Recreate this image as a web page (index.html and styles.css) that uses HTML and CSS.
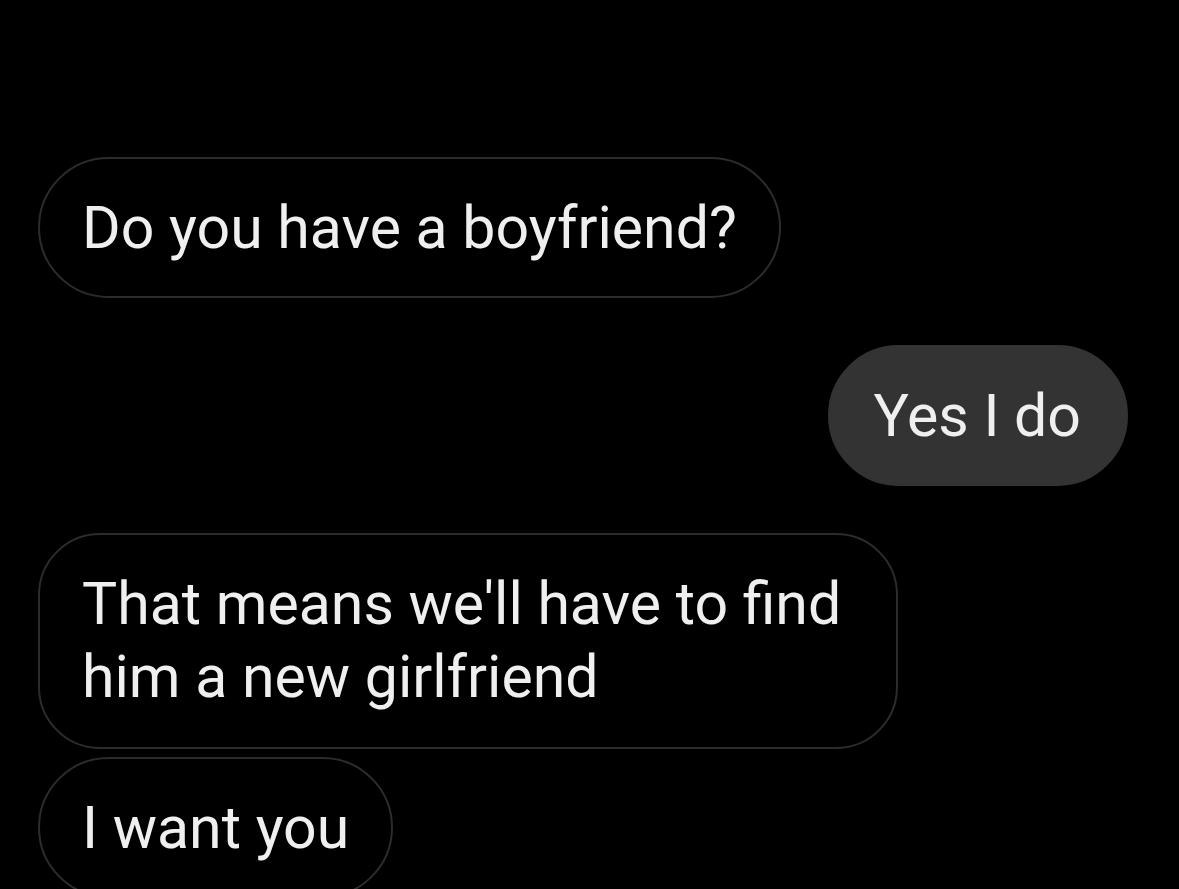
FILE: index.html
```html
<!DOCTYPE html>
<html lang="en">

<head>
    <meta charset="UTF-8">
    <meta name="viewport" content="width=device-width, initial-scale=1.0">
    <title>Messages</title>
    <link rel="stylesheet" href="styles.css">
</head>

<body>
    <div class="chat">
        <!-- Incoming message -->
        <div class="msg incoming">Do you have a boyfriend?</div>

        <!-- Outgoing message -->
        <div class="msg outgoing">Yes I do</div>

        <!-- Incoming group -->
        <div class="group">
            <div class="msg incoming multi">That means we'll have to find<br>him a new girlfriend</div>
            <div class="msg incoming">I want you</div>
        </div>
    </div>
</body>

</html>
```

FILE: styles.css
```css
body {
    margin: 0;
    padding: 0;
    background-color: #000;
    color: #efefef;
    font-family: Roboto, 'Liberation Sans', sans-serif;
    height: 100vh;
    overflow: hidden;
}

.chat {
    display: flex;
    flex-direction: column;
    gap: 47px;
    padding: 157px 51px 0 38px;
}

.group {
    display: flex;
    flex-direction: column;
    align-items: flex-start;
    gap: 8px;
}

.msg {
    font-size: 59px;
    line-height: 73px;
    padding: 32px 42px;
    border: 2px solid #2c2c2c;
    border-radius: 72px;
    white-space: nowrap;
}

.incoming {
    align-self: flex-start;
    background-color: #000;
}

.outgoing {
    align-self: flex-end;
    background-color: #333;
    border-color: #333;
    padding-left: 43px;
    padding-right: 45px;
}

/* Two-line bubble has tighter corners and a wider right side */
.multi {
    border-radius: 62px;
    padding-right: 55px;
    padding-bottom: 34px;
}
```
